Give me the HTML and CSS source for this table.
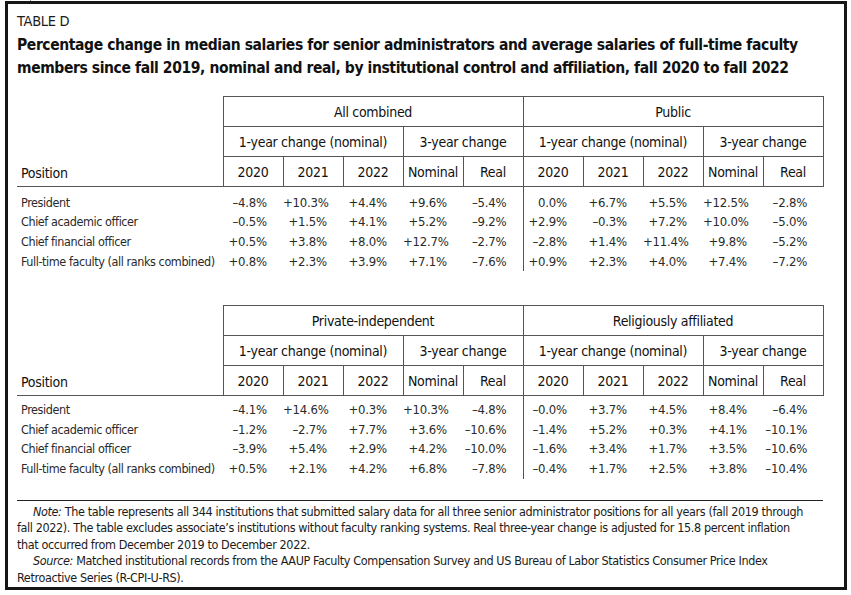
FILE: index.html
```html
<!DOCTYPE html>
<html lang="en">
<head>
<meta charset="utf-8">
<title>Table D</title>
<link rel="stylesheet" href="styles.css">
</head>
<body>
<div class="frame">
  <span class="tick tick-top"></span>
  <span class="tick tick-bottom"></span>
  <div class="label">TABLE D</div>
  <h1 class="title">Percentage change in median salaries for senior administrators and average salaries of full-time faculty<br>members since fall 2019, nominal and real, by institutional control and affiliation, fall 2020 to fall 2022</h1>

  <table class="grid">
    <colgroup><col class="c-pos"><col class="c-num" span="10"></colgroup>
    <thead>
      <tr><th class="pos" rowspan="3">Position</th><th colspan="5">All combined</th><th colspan="5">Public</th></tr>
      <tr><th colspan="3">1-year change (nominal)</th><th colspan="2">3-year change</th><th colspan="3">1-year change (nominal)</th><th colspan="2">3-year change</th></tr>
      <tr><th>2020</th><th>2021</th><th>2022</th><th>Nominal</th><th>Real</th><th>2020</th><th>2021</th><th>2022</th><th>Nominal</th><th>Real</th></tr>
    </thead>
    <tbody>
      <tr class="first"><td class="name">President</td><td>–4.8%</td><td>+10.3%</td><td>+4.4%</td><td>+9.6%</td><td>–5.4%</td><td class="sep">0.0%</td><td>+6.7%</td><td>+5.5%</td><td>+12.5%</td><td>–2.8%</td></tr>
      <tr><td class="name">Chief academic officer</td><td>–0.5%</td><td>+1.5%</td><td>+4.1%</td><td>+5.2%</td><td>–9.2%</td><td class="sep">+2.9%</td><td>–0.3%</td><td>+7.2%</td><td>+10.0%</td><td>–5.0%</td></tr>
      <tr><td class="name">Chief financial officer</td><td>+0.5%</td><td>+3.8%</td><td>+8.0%</td><td>+12.7%</td><td>–2.7%</td><td class="sep">–2.8%</td><td>+1.4%</td><td>+11.4%</td><td>+9.8%</td><td>–5.2%</td></tr>
      <tr><td class="name">Full-time faculty (all ranks combined)</td><td>+0.8%</td><td>+2.3%</td><td>+3.9%</td><td>+7.1%</td><td>–7.6%</td><td class="sep">+0.9%</td><td>+2.3%</td><td>+4.0%</td><td>+7.4%</td><td>–7.2%</td></tr>
    </tbody>
  </table>

  <table class="grid grid-second">
    <colgroup><col class="c-pos"><col class="c-num" span="10"></colgroup>
    <thead>
      <tr><th class="pos" rowspan="3">Position</th><th colspan="5">Private-independent</th><th colspan="5">Religiously affiliated</th></tr>
      <tr><th colspan="3">1-year change (nominal)</th><th colspan="2">3-year change</th><th colspan="3">1-year change (nominal)</th><th colspan="2">3-year change</th></tr>
      <tr><th>2020</th><th>2021</th><th>2022</th><th>Nominal</th><th>Real</th><th>2020</th><th>2021</th><th>2022</th><th>Nominal</th><th>Real</th></tr>
    </thead>
    <tbody>
      <tr class="first"><td class="name">President</td><td>–4.1%</td><td>+14.6%</td><td>+0.3%</td><td>+10.3%</td><td>–4.8%</td><td class="sep">–0.0%</td><td>+3.7%</td><td>+4.5%</td><td>+8.4%</td><td>–6.4%</td></tr>
      <tr><td class="name">Chief academic officer</td><td>–1.2%</td><td>–2.7%</td><td>+7.7%</td><td>+3.6%</td><td>–10.6%</td><td class="sep">–1.4%</td><td>+5.2%</td><td>+0.3%</td><td>+4.1%</td><td>–10.1%</td></tr>
      <tr><td class="name">Chief financial officer</td><td>–3.9%</td><td>+5.4%</td><td>+2.9%</td><td>+4.2%</td><td>–10.0%</td><td class="sep">–1.6%</td><td>+3.4%</td><td>+1.7%</td><td>+3.5%</td><td>–10.6%</td></tr>
      <tr><td class="name">Full-time faculty (all ranks combined)</td><td>+0.5%</td><td>+2.1%</td><td>+4.2%</td><td>+6.8%</td><td>–7.8%</td><td class="sep">–0.4%</td><td>+1.7%</td><td>+2.5%</td><td>+3.8%</td><td>–10.4%</td></tr>
    </tbody>
  </table>

  <div class="notes">
    <p><i>Note:</i> The table represents all 344 institutions that submitted salary data for all three senior administrator positions for all years (fall 2019 through<br>fall 2022). The table excludes associate’s institutions without faculty ranking systems. Real three-year change is adjusted for 15.8 percent inflation<br>that occurred from December 2019 to December 2022.</p>
    <p><i>Source:</i> Matched institutional records from the AAUP Faculty Compensation Survey and US Bureau of Labor Statistics Consumer Price Index<br>Retroactive Series (R-CPI-U-RS).</p>
  </div>
</div>
</body>
</html>
```

FILE: styles.css
```css
body {
  margin: 0;
  background: #ffffff;
  color: #1b1b1b;
  font-family: "Liberation Sans Narrow", "DejaVu Sans Condensed", "Roboto", sans-serif;
}

.frame {
  position: relative;
  box-sizing: border-box;
  width: 842px;
  height: 589px;
  margin: 1px 0 0 5px;
  border: 3px solid #161616;
  padding: 8px 0 0 9px;
}

.tick {
  position: absolute;
  left: 22px;
  width: 1px;
  background: #8a8a8a;
}
.tick-top { top: -4px; height: 1px; }
.tick-bottom { bottom: -9px; height: 6px; }

.label {
  font-size: 14.5px;
  line-height: 18px;
  letter-spacing: -0.3px;
}

.title {
  margin: 4px 0 0;
  font-size: 15.5px;
  line-height: 23px;
  font-weight: bold;
  letter-spacing: -0.4px;
  color: #111;
  white-space: nowrap;
}

.grid {
  border-collapse: collapse;
  table-layout: fixed;
  width: 806px;
  margin-top: 16px;
}
.grid-second { margin-top: 34px; }

.c-pos { width: 206px; }
.c-num { width: 60px; }

.grid th {
  height: 29px;
  padding: 0;
  border: 1px solid #555;
  font-weight: normal;
  font-size: 14px;
  letter-spacing: -0.3px;
  color: #111;
  text-align: center;
  white-space: nowrap;
}
.grid th.pos {
  border: none;
  border-bottom: 1px solid #555;
  text-align: left;
  vertical-align: bottom;
  padding: 0 0 5px 4px;
}

.grid td {
  height: 19.6px;
  padding: 0 16px 0 0;
  font-size: 13px;
  letter-spacing: -0.2px;
  line-height: 16px;
  color: #2a2a2a;
  text-align: right;
  white-space: nowrap;
}
.grid td.name {
  text-align: left;
  padding-left: 4px;
  padding-right: 0;
  font-size: 12.5px;
  letter-spacing: -0.42px;
}
.grid td.sep { border-left: 1px solid #555; }
.grid tr.first td { padding-top: 6px; }
.grid-second tr.first td { padding-top: 4px; }

.notes {
  width: 806px;
  margin-top: 21px;
  border-top: 1px solid #222;
  padding-top: 3px;
  font-size: 12.5px;
  letter-spacing: -0.38px;
  line-height: 16.5px;
  color: #1b1b1b;
}
.notes p {
  margin: 0;
  text-indent: 16px;
  white-space: nowrap;
}
```
